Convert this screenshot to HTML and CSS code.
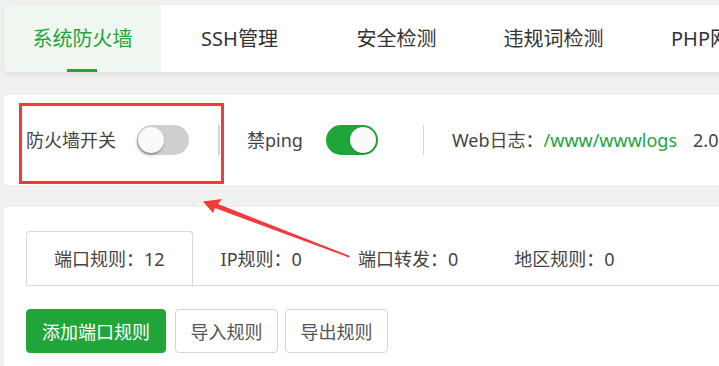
FILE: index.html
```html
<!DOCTYPE html>
<html lang="zh-CN">
<head>
<meta charset="utf-8">
<title>系统防火墙</title>
<link rel="stylesheet" href="styles.css">
</head>
<body>
<div class="page">
  <nav class="topnav">
    <a class="ttab active">系统防火墙</a>
    <a class="ttab">SSH管理</a>
    <a class="ttab">安全检测</a>
    <a class="ttab">违规词检测</a>
    <a class="ttab">PHP网站</a>
  </nav>

  <section class="card status">
    <div class="item first">
      <span class="label">防火墙开关</span>
      <span class="switch off"><span class="knob"></span></span>
    </div>
    <span class="divider"></span>
    <div class="item">
      <span class="label">禁ping</span>
      <span class="switch on"><span class="knob"></span></span>
    </div>
    <span class="divider wide"></span>
    <div class="item">
      <span class="label">Web日志：</span><span class="path">/www/wwwlogs</span>
      <span class="label size">2.0M</span>
    </div>
    <div class="highlight"></div>
  </section>

  <section class="card rules">
    <div class="rtabs">
      <a class="rtab active">端口规则：12</a>
      <a class="rtab">IP规则：0</a>
      <a class="rtab">端口转发：0</a>
      <a class="rtab">地区规则：0</a>
    </div>
    <div class="actions">
      <button class="btn primary">添加端口规则</button>
      <button class="btn">导入规则</button>
      <button class="btn">导出规则</button>
    </div>
  </section>

  <svg class="arrow" width="719" height="366" viewBox="0 0 719 366">
    <polygon points="350,256 349,257.5 215,208 213,213 203,201.5 222,199 218,204" fill="#f23b3b"/>
  </svg>
</div>
</body>
</html>
```

FILE: styles.css
```css
html, body {
  margin: 0;
  padding: 0;
  background: #f0f0f0;
  overflow: hidden;
}
body {
  font-family: "Noto Sans", "Noto Sans CJK SC", sans-serif;
  color: #333;
}
.page {
  position: relative;
  width: 900px;
  height: 366px;
  padding: 5px 0 0 4px;
  box-sizing: border-box;
}
.topnav {
  display: flex;
  height: 67px;
  background: #fff;
  border-radius: 5px 0 0 5px;
  box-shadow: 0 2px 5px rgba(0, 0, 0, 0.08);
  overflow: hidden;
}
.ttab {
  position: relative;
  width: 157px;
  flex: none;
  display: flex;
  align-items: center;
  justify-content: center;
  font-size: 20px;
  line-height: 24px;
  color: #333;
  white-space: nowrap;
}
.ttab.active {
  background: #eff7f0;
  color: #20a53a;
}
.ttab.active::after {
  content: "";
  position: absolute;
  left: 63px;
  bottom: 0;
  width: 30px;
  height: 3px;
  background: #20a53a;
}
.card {
  background: #fff;
  border-radius: 5px 0 0 5px;
}
.status {
  position: relative;
  margin-top: 23px;
  height: 90px;
  display: flex;
  align-items: center;
  padding-left: 22px;
  font-size: 18px;
  line-height: 24px;
}
.item {
  display: flex;
  align-items: center;
  white-space: nowrap;
}
.label {
  color: #444;
}
.switch {
  position: relative;
  display: inline-block;
  width: 52px;
  height: 30px;
  border-radius: 15px;
  margin-left: 21px;
  box-sizing: border-box;
}
.switch.off {
  background: #cfcfcf;
  margin-left: 21px;
}
.switch.on {
  background: #20a53a;
  margin-left: 23px;
}
.knob {
  position: absolute;
  top: 2px;
  width: 26px;
  height: 26px;
  border-radius: 50%;
  background: #fafafa;
}
.switch.off .knob {
  left: 1px;
  box-shadow: -1px 2px 3px rgba(0, 0, 0, 0.35);
}
.switch.on .knob {
  right: 2px;
  box-shadow: 0 1px 2px rgba(0, 0, 0, 0.2);
}
.divider {
  width: 2px;
  height: 30px;
  background: #d8d8d8;
  margin: 0 27px 0 29px;
}
.divider.wide {
  width: 1px;
  margin: 0 28px 0 45px;
}
.path {
  color: #20a53a;
}
.size {
  margin-left: 16px;
}
.highlight {
  position: absolute;
  left: 15px;
  top: 8px;
  width: 199px;
  height: 75px;
  border: 3px solid #f43a3a;
}
.rules {
  margin-top: 22px;
  height: 170px;
  padding: 24px 0 0 22px;
  box-sizing: border-box;
}
.rtabs {
  display: flex;
  height: 54px;
  border-bottom: 1px solid #d9d7e3;
  font-size: 18px;
  line-height: 24px;
}
.rtab {
  display: flex;
  align-items: center;
  padding: 0 27px;
  border: 1px solid transparent;
  border-bottom: none;
  color: #444;
  white-space: nowrap;
}
.rtab.active {
  border-color: #d9d7e3;
  border-radius: 4px 4px 0 0;
  background: #fff;
  margin-bottom: -1px;
  height: 54px;
  box-sizing: border-box;
}
.actions {
  display: flex;
  margin-top: 23px;
}
.btn {
  width: 103px;
  height: 44px;
  padding: 0;
  margin-right: 7px;
  border: 1px solid #d4d4d4;
  border-radius: 4px;
  background: #fff;
  font-family: "Noto Sans", "Noto Sans CJK SC", sans-serif;
  font-size: 18px;
  color: #555;
}
.btn.primary {
  width: 140px;
  background: #20a53a;
  border-color: #20a53a;
  color: #fff;
  margin-right: 9px;
}
.arrow {
  position: absolute;
  left: 0;
  top: 0;
  pointer-events: none;
}
```
